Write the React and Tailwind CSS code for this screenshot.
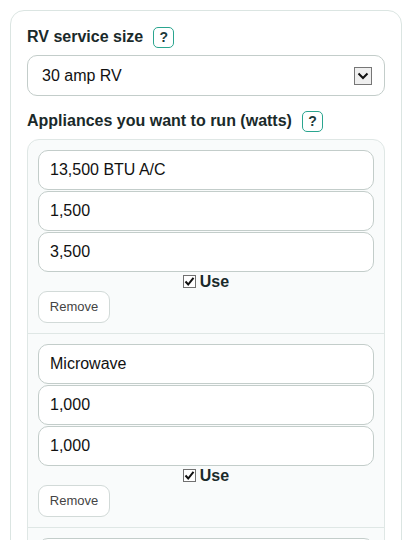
import React from "react";

const items = [
  { name: "13,500 BTU A/C", start: "1,500", run: "3,500" },
  { name: "Microwave", start: "1,000", run: "1,000" },
];

function Help() {
  return (
    <span className="inline-flex h-[21px] w-[21px] items-center justify-center rounded-[5px] border-[1.5px] border-[#2aa58f] text-[14px] font-bold leading-none text-[#1d3a3a]">
      ?
    </span>
  );
}

function Field({ value }) {
  return (
    <div className="flex h-[40px] items-center rounded-[10px] border border-[#c3cdca] bg-white px-[11px] text-[16px] text-[#111]">
      {value}
    </div>
  );
}

function Item({ item }) {
  return (
    <div className="flex flex-col border-b border-[#dfe7e5] p-[10px]">
      <div className="flex flex-col gap-[1px]">
        <Field value={item.name} />
        <Field value={item.start} />
        <Field value={item.run} />
      </div>
      <div className="flex h-[19px] items-center justify-center gap-[4px]">
        <span className="flex h-[13px] w-[13px] items-center justify-center border border-[#707070] bg-white">
          <svg width="11" height="11" viewBox="0 0 11 11">
            <path d="M1.5 5.5 L4.2 8.5 L9.5 1.8" fill="none" stroke="#111" strokeWidth="2" />
          </svg>
        </span>
        <span className="text-[16px] font-bold text-[#1a2a2a]">Use</span>
      </div>
      <div className="flex">
        <button className="h-[32px] w-[72px] rounded-[9px] border border-[#d2dad8] bg-white text-[13px] text-[#444]">
          Remove
        </button>
      </div>
    </div>
  );
}

export default function App() {
  return (
    <div
      className="h-[540px] overflow-hidden bg-white px-[10px] pt-[10px]"
      style={{ fontFamily: '"Liberation Sans", Arial, sans-serif' }}
    >
      <div className="rounded-[14px] border border-[#dbe5e2] bg-white px-[16px] pb-[20px] pt-[15px]">
        <div className="flex h-[22px] items-center gap-[10px]">
          <span className="text-[16px] font-bold text-[#1a2a2a]">RV service size</span>
          <Help />
        </div>
        <div className="mt-[7px] flex h-[41px] items-center justify-between rounded-[10px] border border-[#c3cdca] bg-white pl-[14px] pr-[12px] text-[16px] text-[#111]">
          <span>30 amp RV</span>
          <span className="flex h-[18px] w-[18px] items-center justify-center border border-[#767676] bg-[#efefef]">
            <svg width="12" height="8" viewBox="0 0 12 8">
              <path d="M1.5 1.5 L6 6 L10.5 1.5" fill="none" stroke="#111" strokeWidth="2" />
            </svg>
          </span>
        </div>
        <div className="mt-[14px] flex h-[22px] items-center gap-[10px]">
          <span className="text-[16px] font-bold text-[#1a2a2a]">Appliances you want to run (watts)</span>
          <Help />
        </div>
        <div className="mt-[7px] rounded-[12px] border border-[#dfe7e5] bg-[#f9fbfb]">
          {items.map((it, i) => (
            <Item key={i} item={it} />
          ))}
          <div className="p-[10px]">
            <div className="h-[40px] rounded-[10px] border border-[#c3cdca] bg-white" />
          </div>
        </div>
      </div>
    </div>
  );
}
